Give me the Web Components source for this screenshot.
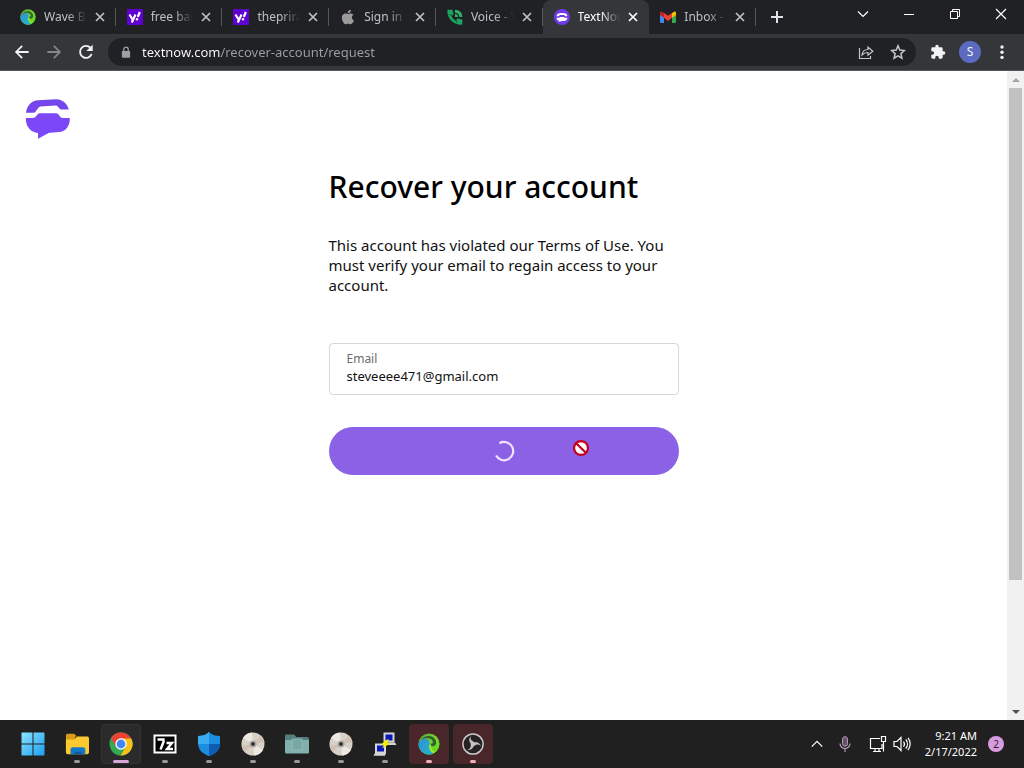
<!DOCTYPE html>
<html lang="en">
<head>
<meta charset="utf-8">
<title>TextNow</title>
<style>
  :root {
    --strip: #202124;
    --toolbar: #35363a;
    --muted: #9aa0a6;
    --brand: #7c48f7;
    --taskbar: #202020;
  }
  html, body {
    height: 100%;
    margin: 0;
  }
  body {
    font-family: "Noto Sans", "Open Sans", sans-serif;
    background: #fff;
  }
</style>
</head>
<body>
<desktop-screen>
  <tab-strip slot="tabs">
    <browser-tab icon="wave">Wave Br</browser-tab>
    <browser-tab icon="yahoo">free bar</browser-tab>
    <browser-tab icon="yahoo">theprira</browser-tab>
    <browser-tab icon="apple">Sign in w</browser-tab>
    <browser-tab icon="voice">Voice - V</browser-tab>
    <browser-tab icon="textnow" active>TextNow</browser-tab>
    <browser-tab icon="gmail">Inbox - </browser-tab>
  </tab-strip>
  <address-bar slot="toolbar"></address-bar>
  <scroll-view slot="page">
    <recover-page>
      <span slot="title">Recover your account</span>
      <span slot="message">This account has violated our Terms of Use. You must verify your email to regain access to your account.</span>
      <text-field slot="form" label="Email" value="steveeee471@gmail.com"></text-field>
      <loading-button slot="form" label="Submit"></loading-button>
    </recover-page>
  </scroll-view>
  <task-bar slot="taskbar">
    <task-button icon="windows" label="Start"></task-button>
    <task-button icon="folder" label="File Explorer" state="open"></task-button>
    <task-button icon="chrome" label="Chrome" state="active"></task-button>
    <task-button icon="sevenzip" label="7-Zip" state="open"></task-button>
    <task-button icon="shield" label="Windows Security" state="open"></task-button>
    <task-button icon="disc" label="Disc" state="open"></task-button>
    <task-button icon="files" label="Files" state="open"></task-button>
    <task-button icon="disc" label="Disc" state="open"></task-button>
    <task-button icon="putty" label="PuTTY" state="open"></task-button>
    <task-button icon="wave" label="Wave Browser" state="alert"></task-button>
    <task-button icon="obs" label="OBS Studio" state="alert"></task-button>
    <system-tray slot="tray"></system-tray>
  </task-bar>
</desktop-screen>

<script>
const ICONS = {
  wave: ['0 0 24 24', `
    <defs>
      <linearGradient id="g" x1="0" y1="0" x2="1" y2="1"><stop offset="0" stop-color="#4c9a4a"/><stop offset=".5" stop-color="#7fd12c"/><stop offset="1" stop-color="#58e01c"/></linearGradient>
      <linearGradient id="b" x1="0" y1="0" x2="1" y2="1"><stop offset="0" stop-color="#2f8fd8"/><stop offset="1" stop-color="#25b7c9"/></linearGradient>
    </defs>
    <circle cx="12" cy="12" r="11.500" fill="url(#g)"/>
    <path d="M.5 12C2 7.500 6 5.500 9.500 6.500c3 1 4 4 3 7-1 3.500 1 7 4 9A11.500 11.500 0 0 1 .5 12z" fill="url(#b)"/>
    <path d="M3 8C6 3 14 1.500 18 6c3 3.500 2 8-1.500 8.500-2 .2-3-1.500-2.500-3 2 .7 3-1.500 1.500-3.500C13 5 7 4.500 3 8z" fill="#2c6330"/>
    <path d="M13 13c-.5 4 2 8 5 8" stroke="#a8ec3a" stroke-width="1.500" fill="none"/>`],
  yahoo: ['0 0 16 16', `
    <rect width="16" height="16" fill="#5f01d1"/>
    <path d="M2.500 5.500l3 5M8.500 5.500l-3.700 8" stroke="#fff" stroke-width="2.200"/>
    <path d="M12.800 3l-2 5" stroke="#fff" stroke-width="2.200"/><circle cx="10" cy="10.200" r="1.200" fill="#fff"/>`],
  apple: ['0 0 24 24', `<path fill="#9b9b9b" d="M16.400 1c.1 1.500-.4 2.800-1.300 3.800-.9 1-2.200 1.700-3.500 1.600-.2-1.400.5-2.800 1.300-3.700C13.800 1.700 15.300 1 16.400 1zM21 17.200c-.6 1.400-1 2-1.700 3.200-1 1.500-2.200 2.600-3.700 2.600-1.300 0-1.800-.8-3.500-.8s-2.200.8-3.500.8c-1.500 0-2.600-1.400-3.500-2.800C2.400 16.300 2 11.600 3.800 9.100 5 7.400 6.700 6.600 8.300 6.600c1.600 0 2.600.9 4 .9 1.300 0 2.100-.9 4-.9 1.400 0 3 .8 4 2.200-3.600 2-3 7 .7 8.400z"/>`],
  voice: ['0 0 24 24', `
    <path fill="#1fa463" d="M2 1h6l2 7-3.500 3c1.800 3 3.500 4.800 6.500 6.500l3-3.500 7 2v6c0 1-1 1.500-2 1.500C9 23.500.5 14 .5 3 .5 2 1 1 2 1z"/>
    <path d="M12 1c6.500 0 11 4.500 11 11h-4.500C18.500 8 16 5.500 12 5.500z" fill="#2bb36c"/>
    <path d="M12 7.500c3 0 4.500 1.500 4.500 4.500H12z" fill="#2bb36c"/>
    <path d="M1 8l9 0-3.500 3zM16 14l-1 9-2-5.500z" fill="#0b7a42"/>`],
  textnow: ['0 0 24 24', `
    <circle cx="12" cy="12" r="12" fill="#6f3be8"/>
    <path d="M4 11c0-4 3-5 8-5s8 1 8 5h-3l-2-2H9l-2 2zM4 13h4l1-1h6l1 1h4c0 4-3 5-8 5h-1l-3 2v-2c-3-1-4-2-4-5z" fill="#fff"/>`],
  gmail: ['0 0 24 18', `
    <path d="M0 3v13c0 1 1 2 2 2h4V7z" fill="#4285f4"/>
    <path d="M24 3v13c0 1-1 2-2 2h-4V7z" fill="#34a853"/>
    <path d="M18 3l3-2c2-1 3 0 3 2v3l-6 4z" fill="#fbbc04"/>
    <path d="M6 3L3 1C1 0 0 1 0 3v3l6 4z" fill="#c5221f"/>
    <path d="M6 3l6 4 6-4v7l-6 5-6-5z" fill="#ea4335"/>`],
  close: ['0 0 16 16', `<path d="M4 4l8 8M12 4l-8 8" stroke="currentColor" stroke-width="1.700"/>`],
  plus: ['0 0 16 16', `<path d="M8 2v12M2 8h12" stroke="currentColor" stroke-width="2"/>`],
  chevron: ['0 0 16 16', `<path d="M3 5.500l5 5 5-5" fill="none" stroke="currentColor" stroke-width="1.200"/>`],
  minimize: ['0 0 16 16', `<path d="M3 8.500h10" stroke="currentColor"/>`],
  restore: ['0 0 16 16', `<path d="M3.500 5.500h7v7h-7zM5.500 5.500v-2h7v7h-2" fill="none" stroke="currentColor"/>`],
  exit: ['0 0 16 16', `<path d="M3 3l10 10M13 3L3 13" stroke="currentColor" stroke-width="1.200"/>`],
  back: ['0 0 24 24', `<path fill="currentColor" d="M22 10.600H6.300l6.900-7L11.400 1.800 1.300 12l10.100 10.200 1.800-1.800-6.900-7H22z"/>`],
  forward: ['0 0 24 24', `<path fill="currentColor" d="M2 10.600h15.700l-6.900-7 1.800-1.800L22.700 12 12.600 22.200l-1.800-1.800 6.900-7H2z"/>`],
  reload: ['0 0 24 24', `<path d="M20.500 15a9 9 0 1 1-2-9.500" fill="none" stroke="currentColor" stroke-width="2.800"/><path d="M22 1v9.500h-9.500z" fill="currentColor"/>`],
  lock: ['0 0 16 16', `<rect x="2.500" y="6.500" width="11" height="9" rx="1" fill="currentColor"/><path d="M5 7V4.500a3 3 0 0 1 6 0V7" fill="none" stroke="currentColor" stroke-width="1.700"/>`],
  share: ['0 0 16 16', `<path d="M1.500 4v10.500h11V12M4 11c.4-3.500 2.500-5.500 6-5.500V3l4.800 4.200L10 11.300V8.500c-2.500 0-4.400.7-6 2.500z" fill="none" stroke="currentColor" stroke-width="1.200"/>`],
  star: ['0 0 16 16', `<path d="M8 1.800l1.800 4.300 4.600.4-3.500 3.100 1 4.600L8 11.800l-3.900 2.400 1-4.600-3.500-3.100 4.600-.4z" fill="none" stroke="currentColor" stroke-width="1.500"/>`],
  puzzle: ['0 0 24 24', `<path fill="currentColor" d="M20.500 11H19V7a2 2 0 0 0-2-2h-4V3.500a2.500 2.500 0 0 0-5 0V5H4a2 2 0 0 0-2 2v3.800h1.500a2.700 2.700 0 0 1 0 5.400H2V20c0 1.100.9 2 2 2h3.800v-1.500a2.700 2.700 0 0 1 5.400 0V22H17a2 2 0 0 0 2-2v-4h1.500a2.500 2.500 0 0 0 0-5z"/>`],
  dots: ['0 0 16 16', `<g fill="currentColor"><circle cx="8" cy="3" r="1.700"/><circle cx="8" cy="8.200" r="1.700"/><circle cx="8" cy="13.400" r="1.700"/></g>`],
  logo: ['0 0 46 40', `
    <path d="M1 13.800C2 6 7 1.600 13 1.300L31 .2c6-.2 11 4 12.800 10.200H37c-1.300 0-2-.3-2.800-1.200l-1.400-1.700c-.7-.8-1.300-1.100-2.300-1L15.500 7.600c-1 .1-1.700.5-2.300 1.300l-2.500 3.600c-.7 1-1.300 1.300-2.500 1.300z" fill="#7446ec"/>
    <path d="M.8 19h7c1.300 0 2.200-.4 3-1.400l1.700-2.100c.7-.9 1.400-1.200 2.500-1.200h16c1 0 1.700.3 2.300 1l2.200 2.600c.7.800 1.300 1.100 2.300 1.100h7C45 27 41 32.500 34 33.100l-8.500.6c-1.500.1-2.300.4-3.300 1.100L13 39.800V34C5.500 33.500.5 27 .8 19z" fill="var(--brand)"/>`],
  spinner: ['0 0 24 24', `<path d="M7 3.500A10 10 0 1 1 3.300 17" fill="none" stroke="#f1e4fc" stroke-width="2.400"/>`],
  blocked: ['0 0 16 16', `<circle cx="8" cy="8" r="6.200" fill="#fff" stroke="#c4001f" stroke-width="2"/><path d="M3.500 3.500l9 9" stroke="#c4001f" stroke-width="2"/>`],
  up: ['0 0 8 8', `<path d="M0 6l4-4 4 4z" fill="#a3a3a3"/>`],
  down: ['0 0 8 8', `<path d="M0 2l4 4 4-4z" fill="#505050"/>`],
  windows: ['0 0 24 24', `
    <defs><linearGradient id="w" gradientUnits="userSpaceOnUse" x1="0" y1="0" x2="24" y2="24"><stop offset="0" stop-color="#8de4ff"/><stop offset="1" stop-color="#1a9df0"/></linearGradient></defs>
    <path d="M1 .5h10.500v11H.5V1zM12.500.5H23l.5.5v10.500h-11zM.5 12.500h11v11H1l-.5-.5zM12.500 12.500h11V23l-.5.5H12.500z" fill="url(#w)"/>`],
  folder: ['0 0 26 24', `
    <path d="M1 3c0-1 .6-2 2-2h7l3 3h-2v4H1z" fill="#d99a16"/>
    <path d="M1 7h9l3-3h11c1 0 2 .7 2 2v15c0 1-.7 2-2 2H3c-1.300 0-2-1-2-2z" fill="#fdc930"/>
    <path d="M6 23v-5c0-1.500 1-2.500 2.500-2.500h11c1.500 0 2.500 1 2.500 2.500v5z" fill="#1478c8"/>
    <path d="M10 23v-2.500h8V23z" fill="#0c5aa0"/>`],
  chrome: ['0 0 24 24', `
    <circle cx="12" cy="12" r="11.500" fill="#34a853"/>
    <path d="M12 12L2 6.300A11.500 11.500 0 0 1 22 6.300z" fill="#ea4335"/>
    <path d="M12 6.500h10.200A11.500 11.500 0 0 1 11.600 23.500l5.200-8.700z" fill="#fbc116"/>
    <path d="M2 6.300l5.200 8.500L12 6.500z" fill="#ea4335"/>
    <circle cx="12" cy="12" r="5.700" fill="#fff"/><circle cx="12" cy="12" r="4.400" fill="#4285f4"/>`],
  sevenzip: ['0 0 24 20', `
    <rect x="1.500" y="1.500" width="21" height="17" fill="#000" stroke="#fff" stroke-width="2"/>
    <path d="M4.500 5.500h6V8L7.500 15.500M13.500 9H19l-5 6h6" fill="none" stroke="#fff" stroke-width="2.400"/>`],
  shield: ['0 0 24 24', `
    <path d="M12 0c3 3 7 4 11 4v7c0 7-5 11-11 13C6 22 1 18 1 11V4c4 0 8-1 11-4z" fill="#1c8ee0"/>
    <path d="M12 0v12H1V4c4 0 8-1 11-4z" fill="#39acf2"/>
    <path d="M12 12h11c0 7-5 10-11 12z" fill="#0f5cb4"/>`],
  disc: ['0 0 24 24', `
    <circle cx="12" cy="12" r="11.500" fill="#d8d1c8"/>
    <path d="M12 12L2 6a11.500 11.500 0 0 1 9-5.500zM12 12l10 6a11.500 11.500 0 0 1-9 5.500z" fill="#efe8e0"/>
    <path d="M12 12L20 3.500A11.500 11.500 0 0 1 23.500 10zM12 12L4 20.500A11.500 11.500 0 0 1 .5 14z" fill="#d2c0b2"/>
    <circle cx="12" cy="12" r="3.600" fill="#a7a6a2"/><circle cx="12" cy="12" r="1.700" fill="#1e1e1e"/>`],
  files: ['0 0 24 20', `
    <path d="M0 2c0-1 .5-1.500 1.500-1.500H9L11.500 3H22c1.300 0 2 .7 2 2v12H0z" fill="#557f7d"/>
    <path d="M0 6h24v12c0 1-.5 1.500-1.500 1.500h-21C.5 19.500 0 19 0 18z" fill="#82b1ad"/>
    <path d="M7 5h10v11H7z" fill="#78a8a4" stroke="#93bdb9" stroke-width=".8"/>`],
  putty: ['0 0 24 24', `
    <path d="M11.500 1.500h9v8h-9zM3 12.500h9v8H3z" fill="#0b17b9" stroke="#d5d5d5" stroke-width="2"/>
    <path d="M11 10.500h11l1.500 2.500H12zM2 21h11l-1 2.800H.5z" fill="#d5d5d5"/>
    <path d="M14 7.500l-6 5 3 .5-2 3.500 8-5-3-.7 2-3.300z" fill="#f5f000"/>`],
  obs: ['0 0 24 24', `
    <circle cx="12" cy="12" r="11" fill="#242225" stroke="#cbc7c8" stroke-width="1.600"/>
    <path id="p" d="M12 12.500C8 11.500 6.500 7 9.500 3.500c-.6 3 .6 5.300 3.500 6.200 1.800.6 2.600 2 2.400 3.800-1-.8-2-1.200-3.400-1z" fill="#c5c1c2"/>
    <use href="#p" transform="rotate(120 12 12)"/><use href="#p" transform="rotate(240 12 12)"/>`],
  caret: ['0 0 16 16', `<path d="M2 11l6-6 6 6" fill="none" stroke="currentColor" stroke-width="1.400"/>`],
  mic: ['0 0 16 16', `<rect x="5.500" y=".7" width="5" height="9.500" rx="2.500" fill="#635267" stroke="#b69abb"/><path d="M3 7.500a5 5 0 0 0 10 0M8 12.500V16" fill="none" stroke="#b69abb" stroke-width="1.200"/>`],
  network: ['0 0 18 18', `<path d="M11 3.500H1.500v10H13V9M4 16.500h8M6 14v2M10 14v2M12.500 1.500h4v5h-4zM14.500 6.500v10" fill="none" stroke="currentColor" stroke-width="1.200"/>`],
  sound: ['0 0 18 16', `<path d="M1 5.500h3l4-4v13l-4-4H1zM10.500 5.500a4 4 0 0 1 0 5M12.800 3.500a7 7 0 0 1 0 9M15 1.800a10 10 0 0 1 0 12.400" fill="none" stroke="currentColor" stroke-width="1.200"/>`]
};

// Small helper: open shadow root with the given markup
function render(el, html) {
  el.attachShadow({ mode: 'open' }).innerHTML = html;
}

const BUTTON_RESET = `
  button {
    display: flex;
    align-items: center;
    justify-content: center;
    padding: 0;
    border: 0;
    background: none;
    color: inherit;
    font: inherit;
  }
`;

class UiIcon extends HTMLElement {
  constructor() {
    super();
    const [box, body] = ICONS[this.getAttribute('name')] || ['0 0 1 1', ''];
    render(this, `
      <style>
        :host { display: block; flex: none; width: var(--size, 16px); height: var(--size, 16px); }
        svg { display: block; width: 100%; height: 100%; }
      </style>
      <svg viewBox="${box}" aria-hidden="true">${body}</svg>
    `);
  }
}

class DesktopScreen extends HTMLElement {
  constructor() {
    super();
    render(this, `
      <style>
        :host { display: flex; flex-direction: column; height: 100%; overflow: hidden; }
        ::slotted([slot="page"]) { flex: 1; min-height: 0; }
      </style>
      <slot name="tabs"></slot>
      <slot name="toolbar"></slot>
      <slot name="page"></slot>
      <slot name="taskbar"></slot>
    `);
  }
}

class TabStrip extends HTMLElement {
  constructor() {
    super();
    render(this, `
      <style>
        ${BUTTON_RESET}
        :host { display: flex; flex: none; height: 34px; padding-left: 9px; background: var(--strip); color: #dee1e6; }
        .tabs { display: flex; flex: 0 1 747px; min-width: 0; }
        .new { width: 42px; height: 34px; }
        .window { display: flex; margin-left: auto; color: #fff; }
        .window button { width: 46px; height: 28px; }
      </style>
      <div class="tabs"><slot></slot></div>
      <button class="new" aria-label="New tab"><ui-icon name="plus"></ui-icon></button>
      <div class="window">
        <button aria-label="Search tabs"><ui-icon name="chevron"></ui-icon></button>
        <button aria-label="Minimize"><ui-icon name="minimize"></ui-icon></button>
        <button aria-label="Restore"><ui-icon name="restore"></ui-icon></button>
        <button aria-label="Close"><ui-icon name="exit"></ui-icon></button>
      </div>
    `);
  }
}

class BrowserTab extends HTMLElement {
  constructor() {
    super();
    render(this, `
      <style>
        ${BUTTON_RESET}
        :host {
          display: flex;
          flex: 1 1 0;
          align-items: center;
          min-width: 0;
          box-sizing: border-box;
          padding-right: 8px;
          color: #bdc1c6;
          font-size: 12px;
          line-height: 16px;
          background: linear-gradient(#55575b, #55575b) right center / 1px 18px no-repeat;
        }
        :host([active]) {
          background: var(--toolbar);
          border-radius: 8px 8px 0 0;
          color: #fff;
        }
        .tab { flex: 1; min-width: 0; height: 34px; gap: 8px; padding-left: 11px; justify-content: flex-start; }
        .label {
          flex: 1;
          overflow: hidden;
          white-space: nowrap;
          text-align: left;
          mask-image: linear-gradient(to right, #000 55%, transparent);
        }
        .close { margin-left: 5px; }
      </style>
      <button class="tab">
        <ui-icon name="${this.getAttribute('icon')}"></ui-icon>
        <span class="label"><slot></slot></span>
      </button>
      <button class="close" aria-label="Close tab"><ui-icon name="close"></ui-icon></button>
    `);
  }
}

class AddressBar extends HTMLElement {
  constructor() {
    super();
    render(this, `
      <style>
        ${BUTTON_RESET}
        :host {
          display: flex;
          flex: none;
          align-items: center;
          height: 36px;
          padding: 0 6px;
          background: var(--toolbar);
          border-bottom: 1px solid #56575a;
          color: #f1f3f4;
        }
        button { width: 32px; height: 32px; flex: none; }
        .forward { color: #85878b; }
        .box {
          display: flex;
          flex: 1;
          align-items: center;
          height: 28px;
          margin: 0 6px;
          padding: 0 2px 0 12px;
          border-radius: 14px;
          background: var(--strip);
          color: #c4c7cb;
        }
        .box ui-icon[name="lock"] { --size: 12px; color: var(--muted); }
        /* the host is lit, the path is dimmed */
        input {
          flex: 1;
          min-width: 0;
          margin-left: 10px;
          padding: 0;
          border: 0;
          outline: 0;
          font: 13px/20px "Noto Sans", "Open Sans", sans-serif;
          background: linear-gradient(to right, #fff 79px, var(--muted) 79px);
          background-clip: text;
          -webkit-background-clip: text;
          -webkit-text-fill-color: transparent;
        }
        .avatar span {
          width: 22px;
          height: 22px;
          border-radius: 50%;
          background: #5c6bc0;
          font-size: 12px;
          line-height: 22px;
          text-align: center;
        }
      </style>
      <button aria-label="Back"><ui-icon name="back"></ui-icon></button>
      <button class="forward" aria-label="Forward"><ui-icon name="forward"></ui-icon></button>
      <button aria-label="Reload"><ui-icon name="reload"></ui-icon></button>
      <div class="box">
        <ui-icon name="lock"></ui-icon>
        <input type="text" aria-label="Address" spellcheck="false" value="textnow.com/recover-account/request">
        <button aria-label="Share"><ui-icon name="share"></ui-icon></button>
        <button aria-label="Bookmark"><ui-icon name="star"></ui-icon></button>
      </div>
      <button aria-label="Extensions"><ui-icon name="puzzle"></ui-icon></button>
      <button class="avatar" aria-label="Profile"><span>S</span></button>
      <button aria-label="Menu"><ui-icon name="dots"></ui-icon></button>
    `);
  }
}

class ScrollView extends HTMLElement {
  constructor() {
    super();
    render(this, `
      <style>
        ${BUTTON_RESET}
        :host { display: flex; background: #fff; }
        .view { flex: 1; min-width: 0; overflow: hidden; }
        .bar { display: flex; flex-direction: column; width: 17px; background: #f1f1f1; }
        button { height: 17px; --size: 8px; }
        .track { flex: 1; padding: 0 2px; }
        .thumb { height: 80%; background: #c1c1c1; }
      </style>
      <div class="view"><slot></slot></div>
      <div class="bar">
        <button aria-label="Scroll up"><ui-icon name="up"></ui-icon></button>
        <div class="track"><div class="thumb"></div></div>
        <button aria-label="Scroll down"><ui-icon name="down"></ui-icon></button>
      </div>
    `);
  }
}

class RecoverPage extends HTMLElement {
  constructor() {
    super();
    render(this, `
      <style>
        :host { display: block; color: #000; }
        header { padding: 28px 24px; }
        header a { display: block; width: 48px; --size: 100%; }
        header ui-icon { height: 40px; }
        main { max-width: 350px; margin: 0 auto; }
        h1 { margin: 0 0 28px; font-size: 30px; line-height: 40px; font-weight: 500; white-space: nowrap; }
        p { margin: 0 0 48px; font-size: 15px; line-height: 20px; color: #111; }
        form { display: flex; flex-direction: column; gap: 32px; }
      </style>
      <header><a href="#" aria-label="TextNow"><ui-icon name="logo"></ui-icon></a></header>
      <main>
        <h1><slot name="title"></slot></h1>
        <p><slot name="message"></slot></p>
        <form><slot name="form"></slot></form>
      </main>
    `);
  }
}

class TextField extends HTMLElement {
  constructor() {
    super();
    render(this, `
      <style>
        :host {
          display: flex;
          flex-direction: column;
          box-sizing: border-box;
          height: 52px;
          padding: 7px 17px;
          border: 1px solid #d6d6d6;
          border-radius: 4px;
        }
        label { font-size: 12px; line-height: 16px; color: #6b6b6b; }
        input {
          padding: 0;
          border: 0;
          outline: 0;
          background: none;
          color: #111;
          font: 13px/18px "Noto Sans", "Open Sans", sans-serif;
        }
      </style>
      <label for="field">${this.getAttribute('label')}</label>
      <input id="field" type="email" value="${this.getAttribute('value')}">
    `);
  }
}

class LoadingButton extends HTMLElement {
  constructor() {
    super();
    render(this, `
      <style>
        ${BUTTON_RESET}
        :host { display: block; position: relative; }
        button {
          width: 100%;
          height: 48px;
          border-radius: 24px;
          background: #8b62e6;
          cursor: not-allowed;
          --size: 22px;
        }
        .pointer { position: absolute; left: 243px; top: 12px; --size: 18px; }
      </style>
      <button disabled aria-label="${this.getAttribute('label')}"><ui-icon name="spinner"></ui-icon></button>
      <ui-icon class="pointer" name="blocked"></ui-icon>
    `);
  }
}

class TaskBar extends HTMLElement {
  constructor() {
    super();
    render(this, `
      <style>
        :host {
          display: flex;
          flex: none;
          align-items: center;
          justify-content: space-between;
          height: 48px;
          padding: 0 12px 0 13px;
          background: var(--taskbar);
          color: #fff;
        }
        .apps { display: flex; gap: 4px; }
      </style>
      <div class="apps"><slot></slot></div>
      <slot name="tray"></slot>
    `);
  }
}

class TaskButton extends HTMLElement {
  constructor() {
    super();
    render(this, `
      <style>
        ${BUTTON_RESET}
        :host { display: block; position: relative; --size: 24px; }
        button { width: 40px; height: 40px; border-radius: 4px; }
        :host([state="active"]) button { background: #2b2b2b; box-shadow: inset 0 0 0 1px #333; }
        :host([state="alert"]) button { background: #482629; }
        :host([icon="wave"]) button, :host([icon="obs"]) button { --size: 22px; }
        :host([state]) button::after {
          content: "";
          position: absolute;
          left: 17px;
          bottom: 1px;
          width: 6px;
          height: 3px;
          border-radius: 2px;
          background: #999;
        }
        :host([state="active"]) button::after { left: 12px; width: 16px; background: #d6a5dc; }
        :host([state="alert"]) button::after { background: #f0b0b8; }
      </style>
      <button aria-label="${this.getAttribute('label')}"><ui-icon name="${this.getAttribute('icon')}"></ui-icon></button>
    `);
  }
}

class SystemTray extends HTMLElement {
  constructor() {
    super();
    render(this, `
      <style>
        ${BUTTON_RESET}
        :host { display: flex; align-items: center; }
        button { height: 40px; }
        .caret { width: 28px; --size: 14px; }
        .mic { width: 28px; }
        .status { gap: 6px; padding: 0 14px 0 10px; --size: 18px; }
        .clock { display: block; font-size: 11px; line-height: 16px; text-align: right; }
        .clock span { display: block; }
        .count {
          width: 16px;
          height: 16px;
          margin: 0 8px 0 11px;
          border-radius: 50%;
          background: #d99be0;
          color: #2b1a2e;
          font-size: 10px;
          line-height: 16px;
        }
      </style>
      <button class="caret" aria-label="Hidden icons"><ui-icon name="caret"></ui-icon></button>
      <button class="mic" aria-label="Microphone"><ui-icon name="mic"></ui-icon></button>
      <button class="status" aria-label="Network and sound"><ui-icon name="network"></ui-icon><ui-icon name="sound"></ui-icon></button>
      <button class="clock"><span>9:21 AM</span><span>2/17/2022</span></button>
      <button class="count">2</button>
    `);
  }
}

customElements.define('ui-icon', UiIcon);
customElements.define('desktop-screen', DesktopScreen);
customElements.define('tab-strip', TabStrip);
customElements.define('browser-tab', BrowserTab);
customElements.define('address-bar', AddressBar);
customElements.define('scroll-view', ScrollView);
customElements.define('recover-page', RecoverPage);
customElements.define('text-field', TextField);
customElements.define('loading-button', LoadingButton);
customElements.define('task-bar', TaskBar);
customElements.define('task-button', TaskButton);
customElements.define('system-tray', SystemTray);
</script>
</body>
</html>
